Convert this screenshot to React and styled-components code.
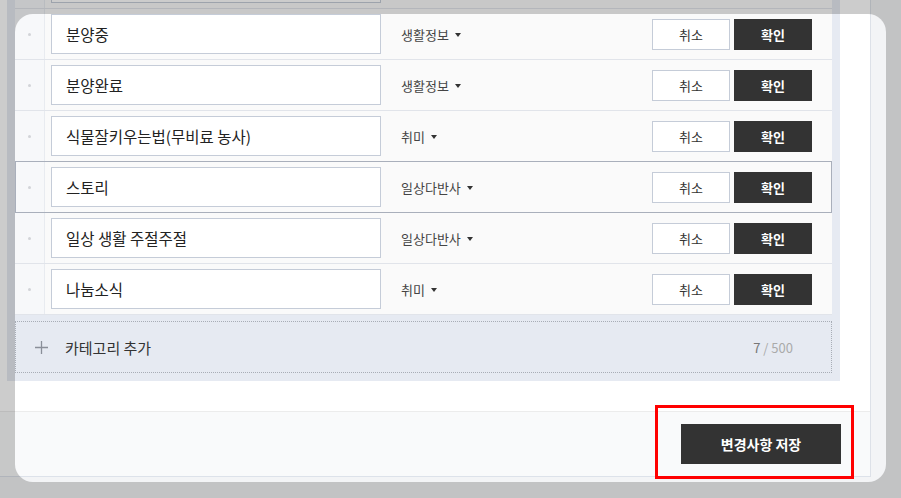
import React from "react";
import styled, { createGlobalStyle } from "styled-components";

const GlobalStyle = createGlobalStyle`
  html, body {
    margin: 0;
    padding: 0;
    background: #f3f4f6;
    overflow: hidden;
  }
  * { box-sizing: border-box; }
  body {
    font-family: "Noto Sans CJK KR", "Noto Sans", sans-serif;
    color: #333;
  }
`;

const Page = styled.div`
  position: relative;
  width: 901px;
  height: 498px;
  overflow: hidden;
`;

/* the page is scrolled: the card starts above the viewport */
const Card = styled.section`
  width: 871px;
  margin-top: -50px;
  background: #fff;
  border-right: 1px solid #dde1e8;
`;

const Body = styled.div`
  padding: 0 30px 30px 7px;
`;

const ListBox = styled.div`
  background: #e6eaf2;
  padding: 8px;
`;

const RowList = styled.div`
  display: flex;
  flex-direction: column;
`;

const Row = styled.div`
  position: relative;
  display: flex;
  align-items: center;
  background: #fafafa;
  height: ${(p) => (p.$active ? "52px" : "51px")};
  margin-top: ${(p) => (p.$active ? "-1px" : "0")};
  border-top: ${(p) => (p.$active ? "1px solid #a9afbb" : "none")};
  border-bottom: 1px solid ${(p) => (p.$active ? "#a9afbb" : "#e1e4ea")};
  &::after {
    content: "";
    display: ${(p) => (p.$active ? "block" : "none")};
    position: absolute;
    top: -1px;
    bottom: -1px;
    left: 0;
    right: 0;
    border-left: 1px solid #a9afbb;
    border-right: 1px solid #a9afbb;
    pointer-events: none;
  }
`;

const Handle = styled.div`
  align-self: stretch;
  width: 30px;
  flex: none;
  background: #f7f8fa;
  border-right: 1px solid #e8ebf0;
  display: flex;
  align-items: center;
  justify-content: center;
`;

const Dot = styled.span`
  width: 3px;
  height: 3px;
  border-radius: 50%;
  background: #d2d4d8;
`;

const NameField = styled.div`
  margin-left: 6px;
  width: 330px;
  height: 40px;
  flex: none;
  background: #fff;
  border: 1px solid #c5ccd8;
  padding: 0 14px;
  display: flex;
  align-items: center;
  font-size: 15.5px;
  color: #222;
  white-space: nowrap;
`;

const Category = styled.div`
  margin-left: 20px;
  display: flex;
  align-items: center;
  gap: 6px;
  font-size: 13px;
  color: #444;
  cursor: pointer;
`;

const Caret = styled.span`
  width: 0;
  height: 0;
  border-left: 3.5px solid transparent;
  border-right: 3.5px solid transparent;
  border-top: 4px solid #333;
  margin-top: 1px;
`;

const Actions = styled.div`
  margin-left: auto;
  padding-right: 20px;
  display: flex;
  gap: 4px;
`;

const SmallButton = styled.button`
  width: 78px;
  height: 31px;
  font-family: inherit;
  font-size: 13px;
  font-weight: ${(p) => (p.$primary ? 700 : 400)};
  color: ${(p) => (p.$primary ? "#fff" : "#333")};
  background: ${(p) => (p.$primary ? "#333" : "#fff")};
  border: 1px solid ${(p) => (p.$primary ? "#333" : "#c5ccd8")};
  padding: 0;
  cursor: pointer;
`;

const AddRow = styled.div`
  margin-top: 6px;
  height: 52px;
  border: 1px dotted #a8adb6;
  display: flex;
  align-items: center;
  padding: 0 38px 0 19px;
`;

const AddLabel = styled.span`
  margin-left: 17px;
  font-size: 15px;
  color: #333;
`;

const Count = styled.span`
  margin-left: auto;
  font-size: 13px;
  color: #aaa;
  b {
    font-weight: 400;
    color: #777;
  }
`;

const Footer = styled.footer`
  display: flex;
  justify-content: flex-end;
  background: #f9fafb;
  border-top: 1px solid #ececec;
  border-bottom: 1px solid #dde2ea;
  padding: 12px 29px 12px 0;
`;

const SaveButton = styled.button`
  width: 160px;
  height: 40px;
  background: #333;
  color: #fff;
  border: none;
  font-family: inherit;
  font-size: 14px;
  font-weight: 700;
  cursor: pointer;
`;

/* tutorial overlay: dims everything outside a rounded spotlight */
const Spotlight = styled.div`
  position: absolute;
  left: 15px;
  top: 14px;
  width: 871px;
  height: 468px;
  border-radius: 18px;
  box-shadow: 0 0 0 1200px rgba(0, 0, 0, 0.2);
  pointer-events: none;
  z-index: 5;
`;

const Highlight = styled.div`
  position: absolute;
  left: 655px;
  top: 405px;
  width: 199px;
  height: 74px;
  border: 3px solid #ff0000;
  pointer-events: none;
  z-index: 6;
`;

const rows = [
  { name: "공지사항", cat: "생활정보" },
  { name: "분양중", cat: "생활정보" },
  { name: "분양완료", cat: "생활정보" },
  { name: "식물잘키우는법(무비료 농사)", cat: "취미" },
  { name: "스토리", cat: "일상다반사", active: true },
  { name: "일상 생활 주절주절", cat: "일상다반사" },
  { name: "나눔소식", cat: "취미" },
];

function PlusIcon() {
  return (
    <svg width="13" height="13" viewBox="0 0 13 13" aria-hidden="true">
      <path d="M6.5 0v13M0 6.5h13" stroke="#8a8f99" strokeWidth="1.3" fill="none" />
    </svg>
  );
}

export default function App() {
  return (
    <>
      <GlobalStyle />
      <Page>
        <Card>
          <Body>
            <ListBox>
              <RowList>
                {rows.map((r, i) => (
                  <Row key={i} $active={r.active}>
                    <Handle>
                      <Dot />
                    </Handle>
                    <NameField>{r.name}</NameField>
                    <Category>
                      {r.cat}
                      <Caret />
                    </Category>
                    <Actions>
                      <SmallButton>취소</SmallButton>
                      <SmallButton $primary>확인</SmallButton>
                    </Actions>
                  </Row>
                ))}
              </RowList>
              <AddRow>
                <PlusIcon />
                <AddLabel>카테고리 추가</AddLabel>
                <Count>
                  <b>7</b> / 500
                </Count>
              </AddRow>
            </ListBox>
          </Body>
          <Footer>
            <SaveButton>변경사항 저장</SaveButton>
          </Footer>
        </Card>
        <Spotlight />
        <Highlight />
      </Page>
    </>
  );
}
